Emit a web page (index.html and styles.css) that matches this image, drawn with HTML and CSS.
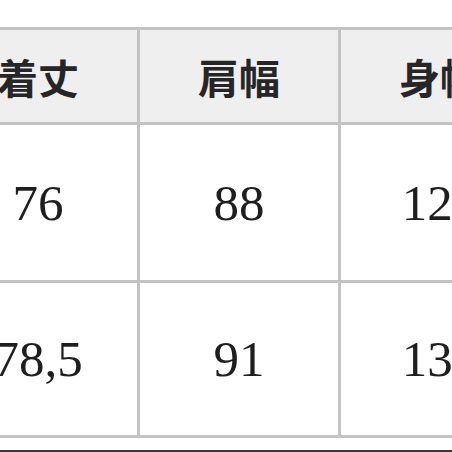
FILE: index.html
```html
<!DOCTYPE html>
<html lang="ja">
<head>
<meta charset="utf-8">
<link rel="stylesheet" href="styles.css">
</head>
<body>
<div class="page">
  <table class="sizes">
    <colgroup><col class="c"><col class="c"><col class="c"></colgroup>
    <thead>
      <tr class="head"><th>着丈</th><th>肩幅</th><th>身幅</th></tr>
    </thead>
    <tbody>
      <tr class="r1"><td>76</td><td>88</td><td>126</td></tr>
      <tr class="r2"><td>78,5</td><td>91</td><td>133</td></tr>
    </tbody>
  </table>
  <div class="rule"></div>
</div>
</body>
</html>
```
FILE: styles.css
```css
html, body {
  margin: 0;
  padding: 0;
  background: #ffffff;
}
.page {
  width: 452px;
  height: 452px;
  overflow: hidden;
  padding-top: 27px;
  box-sizing: border-box;
  position: relative;
}
.sizes {
  border-collapse: collapse;
  table-layout: fixed;
  width: 603px;
  margin-left: -64px;
}
.sizes .c {
  width: 201px;
}
.sizes th,
.sizes td {
  border: 3px solid #c3c3c3;
  text-align: center;
  vertical-align: middle;
  padding: 0;
}
.sizes th {
  background: #efefef;
  height: 92px;
  font-family: "Noto Sans CJK JP", sans-serif;
  font-weight: 700;
  font-size: 41px;
  color: #262626;
}
.sizes td {
  font-family: "Liberation Serif", serif;
  font-size: 51px;
  color: #1e1e1e;
}
.r1 td { height: 155px; }
.r2 td { height: 152px; }
.rule {
  margin-top: 12px;
  height: 2px;
  background: #3a3a3a;
}
```
